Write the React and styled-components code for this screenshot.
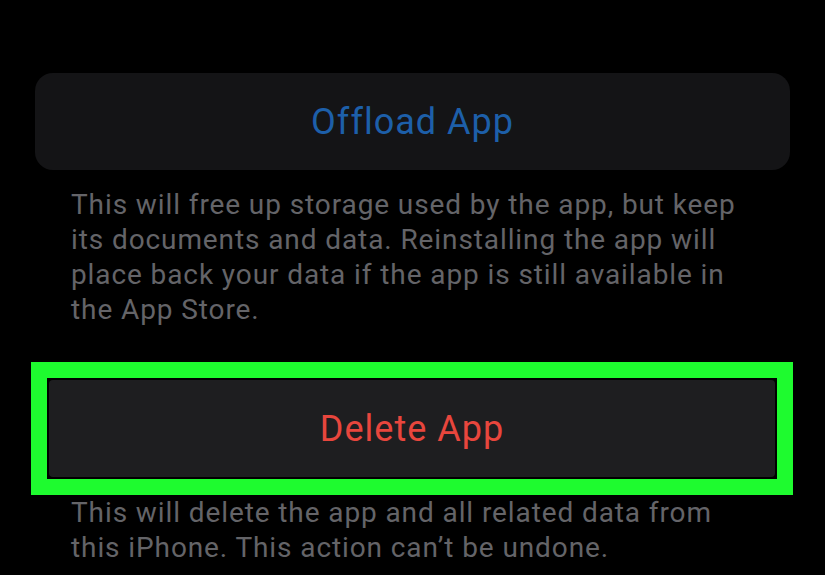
import React from "react";
import styled, { createGlobalStyle } from "styled-components";

const Global = createGlobalStyle`
  html, body { margin: 0; padding: 0; background: #000; }
  body { font-family: Roboto, "Noto Sans", "Liberation Sans", sans-serif; }
`;

const Page = styled.div`
  width: 825px;
  height: 575px;
  overflow: hidden;
  background: #000;
  padding: 73px 35px 0 35px;
  box-sizing: border-box;
  display: flex;
  flex-direction: column;
`;

const ActionButton = styled.div`
  height: ${(p) => p.$h}px;
  border-radius: ${(p) => p.$radius}px;
  background: ${(p) => p.$bg};
  color: ${(p) => p.$color};
  font-size: 36px;
  display: flex;
  align-items: center;
  justify-content: center;
  letter-spacing: 1px;
`;

const Note = styled.p`
  margin: ${(p) => p.$mt}px 0 0 0;
  padding: 0 0 0 36px;
  font-size: 28px;
  line-height: 35px;
  color: #646468;
  letter-spacing: 0.9px;
  white-space: nowrap;
`;

const Line = styled.span`
  display: block;
`;

const Highlight = styled.div`
  margin: 35px -3px 0 -4px;
  border: 16px solid #1efb2f;
  padding: 2px;
  background: #000;
`;

export default function App() {
  return (
    <>
      <Global />
      <Page>
        <ActionButton $h={97} $radius={18} $bg="#141416" $color="#1d5fa9">
          Offload App
        </ActionButton>
        <Note $mt={17}>
          <Line>This will free up storage used by the app, but keep</Line>
          <Line>its documents and data. Reinstalling the app will</Line>
          <Line>place back your data if the app is still available in</Line>
          <Line>the App Store.</Line>
        </Note>
        <Highlight>
          <ActionButton $h={97} $radius={4} $bg="#1e1e20" $color="#e8463d">
            Delete App
          </ActionButton>
        </Highlight>
        <Note $mt={0}>
          <Line>This will delete the app and all related data from</Line>
          <Line>this iPhone. This action can’t be undone.</Line>
        </Note>
      </Page>
    </>
  );
}
